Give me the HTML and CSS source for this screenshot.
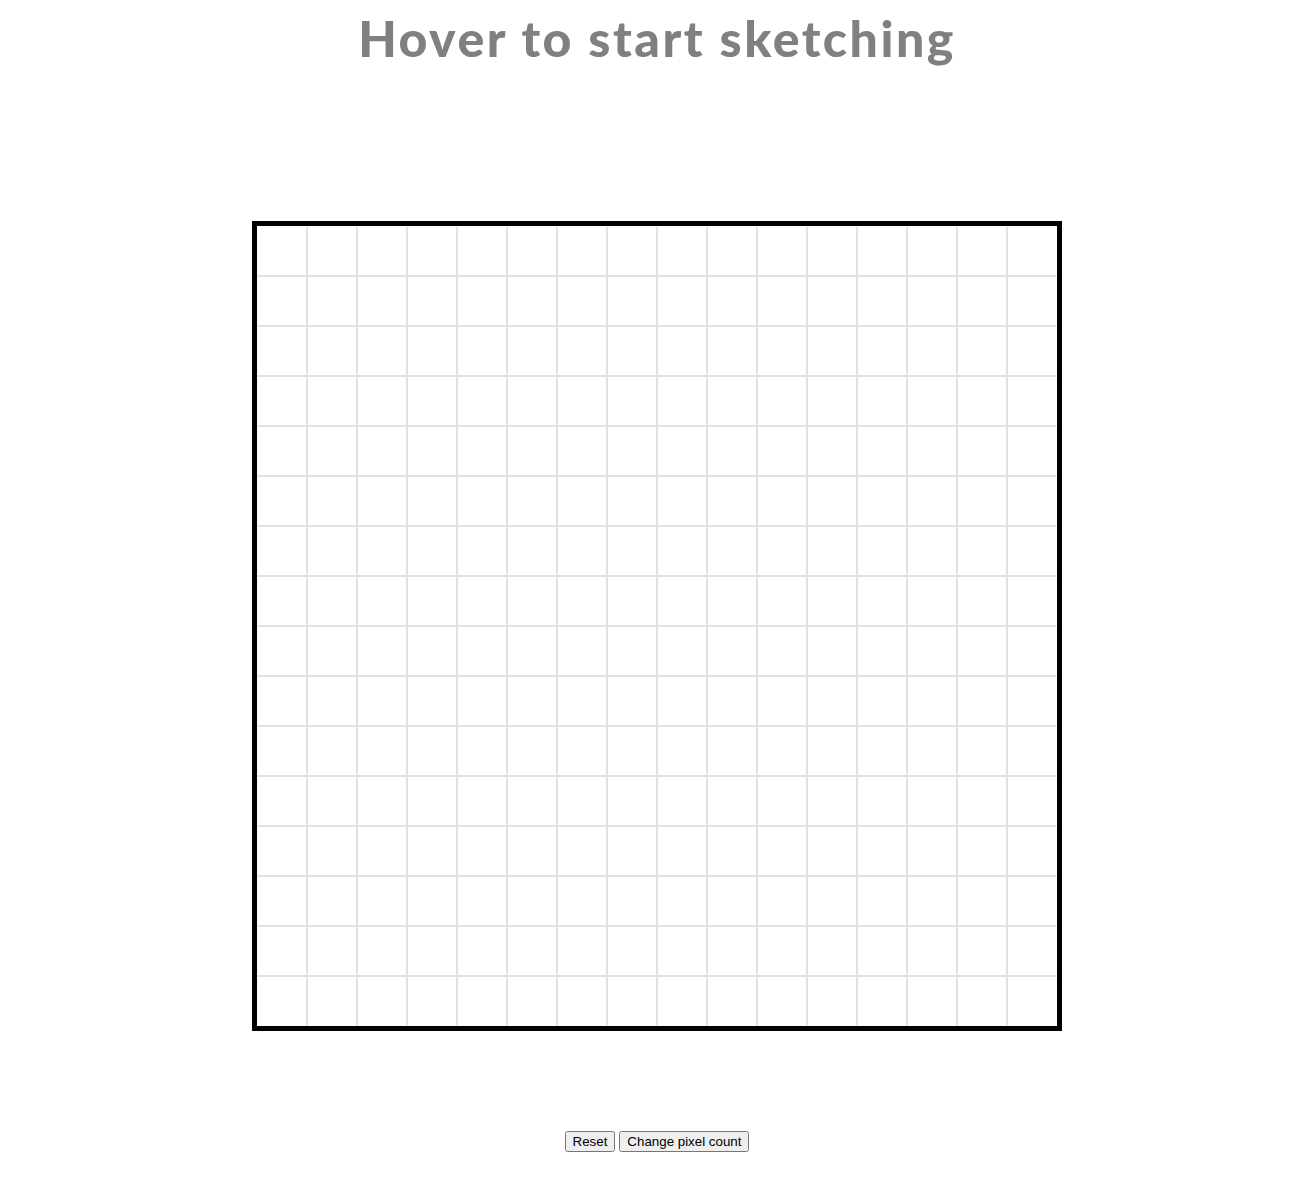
FILE: index.html
```html
<!DOCTYPE html>
<html lang="en">
<head>
<meta charset="utf-8">
<title>Etch-a-Sketch</title>
<link rel="stylesheet" href="styles.css">
</head>
<body>
<div class="page">
  <h1 class="title">Hover to start sketching</h1>
  <div class="board">
    <div class="grid">
      <div class="cell"></div><div class="cell"></div><div class="cell"></div><div class="cell"></div><div class="cell"></div><div class="cell"></div><div class="cell"></div><div class="cell"></div><div class="cell"></div><div class="cell"></div><div class="cell"></div><div class="cell"></div><div class="cell"></div><div class="cell"></div><div class="cell"></div><div class="cell"></div>
      <div class="cell"></div><div class="cell"></div><div class="cell"></div><div class="cell"></div><div class="cell"></div><div class="cell"></div><div class="cell"></div><div class="cell"></div><div class="cell"></div><div class="cell"></div><div class="cell"></div><div class="cell"></div><div class="cell"></div><div class="cell"></div><div class="cell"></div><div class="cell"></div>
      <div class="cell"></div><div class="cell"></div><div class="cell"></div><div class="cell"></div><div class="cell"></div><div class="cell"></div><div class="cell"></div><div class="cell"></div><div class="cell"></div><div class="cell"></div><div class="cell"></div><div class="cell"></div><div class="cell"></div><div class="cell"></div><div class="cell"></div><div class="cell"></div>
      <div class="cell"></div><div class="cell"></div><div class="cell"></div><div class="cell"></div><div class="cell"></div><div class="cell"></div><div class="cell"></div><div class="cell"></div><div class="cell"></div><div class="cell"></div><div class="cell"></div><div class="cell"></div><div class="cell"></div><div class="cell"></div><div class="cell"></div><div class="cell"></div>
      <div class="cell"></div><div class="cell"></div><div class="cell"></div><div class="cell"></div><div class="cell"></div><div class="cell"></div><div class="cell"></div><div class="cell"></div><div class="cell"></div><div class="cell"></div><div class="cell"></div><div class="cell"></div><div class="cell"></div><div class="cell"></div><div class="cell"></div><div class="cell"></div>
      <div class="cell"></div><div class="cell"></div><div class="cell"></div><div class="cell"></div><div class="cell"></div><div class="cell"></div><div class="cell"></div><div class="cell"></div><div class="cell"></div><div class="cell"></div><div class="cell"></div><div class="cell"></div><div class="cell"></div><div class="cell"></div><div class="cell"></div><div class="cell"></div>
      <div class="cell"></div><div class="cell"></div><div class="cell"></div><div class="cell"></div><div class="cell"></div><div class="cell"></div><div class="cell"></div><div class="cell"></div><div class="cell"></div><div class="cell"></div><div class="cell"></div><div class="cell"></div><div class="cell"></div><div class="cell"></div><div class="cell"></div><div class="cell"></div>
      <div class="cell"></div><div class="cell"></div><div class="cell"></div><div class="cell"></div><div class="cell"></div><div class="cell"></div><div class="cell"></div><div class="cell"></div><div class="cell"></div><div class="cell"></div><div class="cell"></div><div class="cell"></div><div class="cell"></div><div class="cell"></div><div class="cell"></div><div class="cell"></div>
      <div class="cell"></div><div class="cell"></div><div class="cell"></div><div class="cell"></div><div class="cell"></div><div class="cell"></div><div class="cell"></div><div class="cell"></div><div class="cell"></div><div class="cell"></div><div class="cell"></div><div class="cell"></div><div class="cell"></div><div class="cell"></div><div class="cell"></div><div class="cell"></div>
      <div class="cell"></div><div class="cell"></div><div class="cell"></div><div class="cell"></div><div class="cell"></div><div class="cell"></div><div class="cell"></div><div class="cell"></div><div class="cell"></div><div class="cell"></div><div class="cell"></div><div class="cell"></div><div class="cell"></div><div class="cell"></div><div class="cell"></div><div class="cell"></div>
      <div class="cell"></div><div class="cell"></div><div class="cell"></div><div class="cell"></div><div class="cell"></div><div class="cell"></div><div class="cell"></div><div class="cell"></div><div class="cell"></div><div class="cell"></div><div class="cell"></div><div class="cell"></div><div class="cell"></div><div class="cell"></div><div class="cell"></div><div class="cell"></div>
      <div class="cell"></div><div class="cell"></div><div class="cell"></div><div class="cell"></div><div class="cell"></div><div class="cell"></div><div class="cell"></div><div class="cell"></div><div class="cell"></div><div class="cell"></div><div class="cell"></div><div class="cell"></div><div class="cell"></div><div class="cell"></div><div class="cell"></div><div class="cell"></div>
      <div class="cell"></div><div class="cell"></div><div class="cell"></div><div class="cell"></div><div class="cell"></div><div class="cell"></div><div class="cell"></div><div class="cell"></div><div class="cell"></div><div class="cell"></div><div class="cell"></div><div class="cell"></div><div class="cell"></div><div class="cell"></div><div class="cell"></div><div class="cell"></div>
      <div class="cell"></div><div class="cell"></div><div class="cell"></div><div class="cell"></div><div class="cell"></div><div class="cell"></div><div class="cell"></div><div class="cell"></div><div class="cell"></div><div class="cell"></div><div class="cell"></div><div class="cell"></div><div class="cell"></div><div class="cell"></div><div class="cell"></div><div class="cell"></div>
      <div class="cell"></div><div class="cell"></div><div class="cell"></div><div class="cell"></div><div class="cell"></div><div class="cell"></div><div class="cell"></div><div class="cell"></div><div class="cell"></div><div class="cell"></div><div class="cell"></div><div class="cell"></div><div class="cell"></div><div class="cell"></div><div class="cell"></div><div class="cell"></div>
      <div class="cell"></div><div class="cell"></div><div class="cell"></div><div class="cell"></div><div class="cell"></div><div class="cell"></div><div class="cell"></div><div class="cell"></div><div class="cell"></div><div class="cell"></div><div class="cell"></div><div class="cell"></div><div class="cell"></div><div class="cell"></div><div class="cell"></div><div class="cell"></div>
    </div>
  </div>
  <div class="controls">
    <button class="btn" type="button">Reset</button>
    <button class="btn" type="button">Change pixel count</button>
  </div>
</div>
</body>
</html>
```

FILE: styles.css
```css
html, body {
  background: #ffffff;
}

body {
  margin: 8px;
}

.page {
  width: calc(100vw - 1px);
  display: flex;
  flex-direction: column;
  align-items: center;
}

.title {
  margin: 0;
  padding-top: 2px;
  font-family: "Lato", "Open Sans", sans-serif;
  font-weight: 900;
  font-size: 50px;
  line-height: 56px;
  letter-spacing: 2.5px;
  color: #808080;
  text-align: center;
}

.board {
  margin-top: 155px;
  border: 5px solid #000000;
  width: 800px;
  height: 800px;
}

.grid {
  display: grid;
  grid-template-columns: repeat(16, 50px);
  grid-template-rows: repeat(16, 50px);
}

.cell {
  box-sizing: border-box;
  border: 1px solid #e1e1e1;
}

.cell:nth-child(16n+1) {
  border-left-color: transparent;
}

.cell:nth-child(16n) {
  border-right-color: transparent;
}

.cell:nth-child(-n+16) {
  border-top-color: transparent;
}

.cell:nth-last-child(-n+16) {
  border-bottom-color: transparent;
}

.controls {
  margin-top: 100px;
  display: flex;
  gap: 4px;
}

.btn {
  font-family: "Liberation Sans", Arial, sans-serif;
  font-size: 13.3333px;
  padding: 1px 6px;
  color: #000000;
}
```
